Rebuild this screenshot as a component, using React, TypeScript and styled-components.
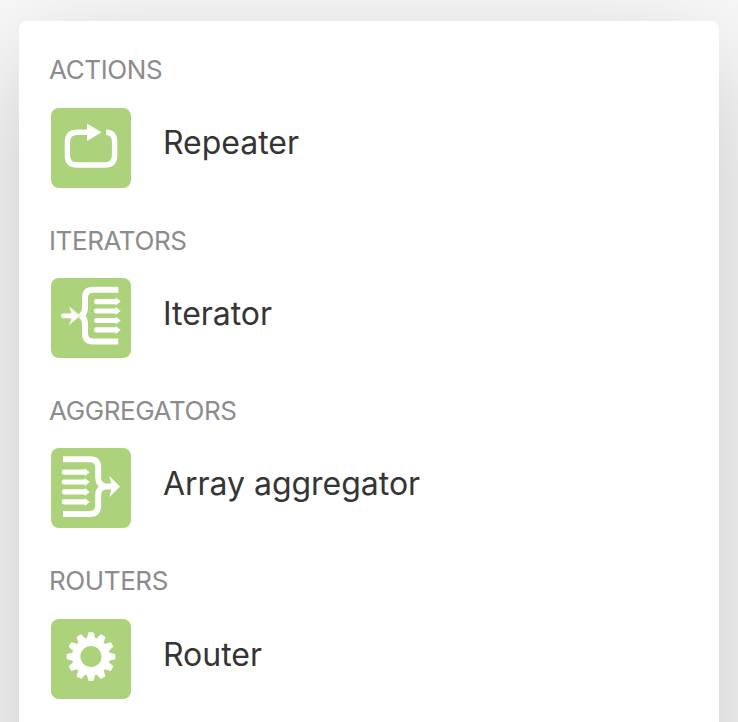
import React from "react";
import styled, { createGlobalStyle } from "styled-components";

const GlobalStyle = createGlobalStyle`
  * { box-sizing: border-box; }
  html, body { margin: 0; height: 722px; overflow: hidden; background: #f9f9f9; }
  body { font-family: Inter, "Liberation Sans", sans-serif; }
`;

const Page = styled.main`
  height: 722px;
  padding: 21px 19px 0;
  overflow: hidden;
`;

const Panel = styled.div`
  height: 1060px;
  padding: 32.2px 30px 0;
  border-radius: 8px;
  background: #fff;
  box-shadow: 0 36px 120px rgba(0, 0, 0, 0.21);
`;

const Group = styled.section`
  height: 170.4px;
`;

const GroupTitle = styled.h2`
  margin: 0;
  height: 34px;
  line-height: 34px;
  font-size: 26px;
  font-weight: 400;
  letter-spacing: -0.4px;
  color: #8c8c8c;
`;

const ModuleRow = styled.div`
  display: flex;
  gap: 32px;
  margin-top: 20.4px;
  padding-left: 2px;
`;

const Tile = styled.svg`
  flex: none;
  width: 80px;
  height: 80px;
  border-radius: 8px;
  background: #acd27b;
`;

const ModuleName = styled.span`
  margin-top: -0.2px;
  line-height: 72px;
  font-size: 32px;
  letter-spacing: -0.03px;
  color: #353535;
`;

const RepeaterIcon = () => (
  <>
    <path
      d="M37 24.2H26Q16.4 24.2 16.4 34V47.5Q16.4 57 26 57H54Q63.6 57 63.6 47.5V34Q63.6 24.2 55 24.2"
      fill="none"
      stroke="#fff"
      strokeWidth="5.4"
    />
    <path d="M36 15.5L50.5 24.2L36 33Z" fill="#fff" />
  </>
);

const SmallArrow = ({ x, y, length }: { x: number; y: number; length: number }) => (
  <g fill="#fff">
    <rect x={x} y={y - 2.6} width={length} height="5.2" rx="2.4" />
    <path d={`M${x + length - 2.5} ${y - 4}L${x + length + 2.5} ${y}L${x + length - 2.5} ${y + 4}Z`} />
  </g>
);

const IteratorIcon = () => (
  <>
    <path
      d="M67.3 11.8H42Q34 11.8 34 20V30Q34 34.5 30.5 37.8Q34 41 34 45V55.5Q34 63.5 42 63.5H67.3"
      fill="none"
      stroke="#fff"
      strokeWidth="6"
    />
    <path d="M12.5 37.8H22" stroke="#fff" strokeWidth="4.8" strokeLinecap="round" />
    <path
      d="M17.7 27.8L29.3 37.8L17.7 47.8L21 37.8Z"
      fill="#fff"
      stroke="#acd27b"
      strokeWidth="0.5"
    />
    <path d="M18 37.8H24" stroke="#fff" strokeWidth="4.8" />
    {[23.6, 33, 42.5, 51.9].map((y) => (
      <SmallArrow key={y} x={43} y={y} length={24.2} />
    ))}
  </>
);

const AggregatorIcon = () => (
  <>
    <path
      d="M12 11.3H39Q47.2 11.3 47.2 19.5V30Q47.2 36.5 54 38.4Q47.2 40 47.2 47V57.8Q47.2 66 39 66H12"
      fill="none"
      stroke="#fff"
      strokeWidth="6"
    />
    <path d="M51 38.4H63" stroke="#fff" strokeWidth="6" />
    <path d="M58.3 28L69 38.4L58.3 49.2L61 38.4Z" fill="#fff" />
    {[24.2, 34, 43.9, 53.9].map((y) => (
      <SmallArrow key={y} x={10.8} y={y} length={25.4} />
    ))}
  </>
);

const GEAR_TEETH = Array.from({ length: 12 }, (_, i) => i * 30);

const RouterIcon = () => (
  <g transform="translate(40 37.6)">
    <circle r="14.8" fill="none" stroke="#fff" strokeWidth="8.4" />
    {GEAR_TEETH.map((angle) => (
      <path
        key={angle}
        d="M-4.2 -17.5L-2.9 -23.5Q-2.7 -24.3 -1.9 -24.3H1.9Q2.7 -24.3 2.9 -23.5L4.2 -17.5Z"
        fill="#fff"
        transform={`rotate(${angle})`}
      />
    ))}
  </g>
);

const groups = [
  { title: "ACTIONS", name: "Repeater", Icon: RepeaterIcon },
  { title: "ITERATORS", name: "Iterator", Icon: IteratorIcon },
  { title: "AGGREGATORS", name: "Array aggregator", Icon: AggregatorIcon },
  { title: "ROUTERS", name: "Router", Icon: RouterIcon },
];

export default function App() {
  return (
    <>
      <GlobalStyle />
      <Page>
        <Panel>
          {groups.map(({ title, name, Icon }) => (
            <Group key={title}>
              <GroupTitle>{title}</GroupTitle>
              <ModuleRow>
                <Tile viewBox="0 0 80 80" aria-hidden="true">
                  <Icon />
                </Tile>
                <ModuleName>{name}</ModuleName>
              </ModuleRow>
            </Group>
          ))}
        </Panel>
      </Page>
    </>
  );
}
